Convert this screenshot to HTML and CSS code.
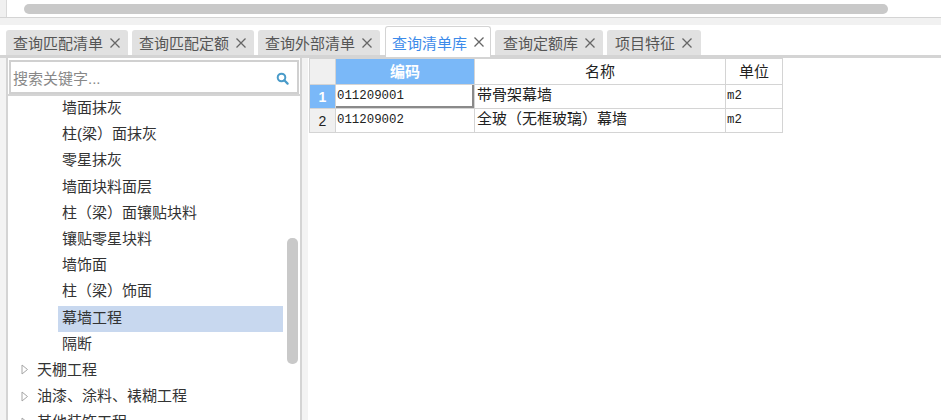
FILE: index.html
```html
<!DOCTYPE html>
<html lang="zh">
<head>
<meta charset="utf-8">
<title>查询清单库</title>
<link rel="stylesheet" href="styles.css">
</head>
<body>
<div class="app">
  <div class="top-panel"><div class="hscroll"></div></div>
  <div class="tabs">
    <div class="tab"><span>查询匹配清单</span><svg class="x" width="10" height="10" viewBox="0 0 10 10"><path d="M.5.5l9 9M9.500.5l-9 9"/></svg></div>
    <div class="tab"><span>查询匹配定额</span><svg class="x" width="10" height="10" viewBox="0 0 10 10"><path d="M.5.5l9 9M9.500.5l-9 9"/></svg></div>
    <div class="tab"><span>查询外部清单</span><svg class="x" width="10" height="10" viewBox="0 0 10 10"><path d="M.5.5l9 9M9.500.5l-9 9"/></svg></div>
    <div class="tab active"><span>查询清单库</span><svg class="x" width="10" height="10" viewBox="0 0 10 10"><path d="M.5.5l9 9M9.500.5l-9 9"/></svg></div>
    <div class="tab fifth"><span>查询定额库</span><svg class="x" width="10" height="10" viewBox="0 0 10 10"><path d="M.5.5l9 9M9.500.5l-9 9"/></svg></div>
    <div class="tab last"><span>项目特征</span><svg class="x" width="10" height="10" viewBox="0 0 10 10"><path d="M.5.5l9 9M9.500.5l-9 9"/></svg></div>
  </div>
  <div class="main">
    <aside class="side">
      <div class="search">
        <span class="ph">搜索关键字...</span>
        <svg class="mag" width="13" height="13" viewBox="0 0 13 13"><circle cx="5.500" cy="5.500" r="3.800" fill="none" stroke="#4a9bc9" stroke-width="2"/><path d="M8.300 8.300 L11.600 11.600" stroke="#4a9bc9" stroke-width="2.200" stroke-linecap="round"/></svg>
      </div>
      <div class="tree">
        <div class="node leaf">墙面抹灰</div>
        <div class="node leaf">柱(梁）面抹灰</div>
        <div class="node leaf">零星抹灰</div>
        <div class="node leaf">墙面块料面层</div>
        <div class="node leaf">柱（梁）面镶贴块料</div>
        <div class="node leaf">镶贴零星块料</div>
        <div class="node leaf">墙饰面</div>
        <div class="node leaf">柱（梁）饰面</div>
        <div class="node sel"><span>幕墙工程</span></div>
        <div class="node leaf">隔断</div>
        <div class="node group"><svg class="arrow" width="8" height="11" viewBox="0 0 8 11"><path d="M1 1 L6.500 5.500 L1 10 Z" fill="#fff" stroke="#a6a6a6"/></svg>天棚工程</div>
        <div class="node group"><svg class="arrow" width="8" height="11" viewBox="0 0 8 11"><path d="M1 1 L6.500 5.500 L1 10 Z" fill="#fff" stroke="#a6a6a6"/></svg>油漆、涂料、裱糊工程</div>
        <div class="node group"><svg class="arrow" width="8" height="11" viewBox="0 0 8 11"><path d="M1 1 L6.500 5.500 L1 10 Z" fill="#fff" stroke="#a6a6a6"/></svg>其他装饰工程</div>
        <div class="vscroll"></div>
      </div>
    </aside>
    <section class="grid-wrap">
      <table class="grid">
        <colgroup><col class="c0"><col class="c1"><col class="c2"><col class="c3"></colgroup>
        <tr class="head"><th class="corner"></th><th class="on">编码</th><th>名称</th><th>单位</th></tr>
        <tr><th class="rn on">1</th><td class="cur">011209001</td><td class="big">带骨架幕墙</td><td>m2</td></tr>
        <tr><th class="rn">2</th><td>011209002</td><td class="big">全玻（无框玻璃）幕墙</td><td>m2</td></tr>
      </table>
    </section>
  </div>
</div>
</body>
</html>
```
FILE: styles.css
```css
html, body { margin: 0; padding: 0; }
body { width: 941px; height: 420px; overflow: hidden; background: #fff; font-family: "Liberation Sans", "Noto Sans CJK SC", sans-serif; font-size: 15px; color: #333; }
.app { display: flex; flex-direction: column; height: 420px; }
.top-panel { height: 18px; padding: 4px 53px 0 24px; box-sizing: border-box; background: linear-gradient(90deg, #f0f0f0 0, #f0f0f0 6px, #d9d9d9 6px, #d9d9d9 7px, #fff 7px); border-bottom: 1px solid #d4d4d4; }
.hscroll { height: 10px; background: #c9c9c9; border-radius: 5px; }
.tabs { display: flex; gap: 4px; height: 40px; box-sizing: border-box; padding: 0 0 0 6px; background: linear-gradient(#f1f1f1 0, #f1f1f1 7px, #fff 7px); border-bottom: 3px solid #d4d4d4; align-items: flex-end; }
.tab { display: flex; align-items: center; gap: 6px; height: 25px; box-sizing: border-box; padding: 0 8px 0 7px; background: #e1e1e1; border-radius: 3px 3px 0 0; color: #555; font-size: 15px; white-space: nowrap; }
.tab.active { height: 31px; background: #fff; border: 1px solid #d4d4d4; border-bottom: 0; color: #3d8bea; margin: 0 0 -2px 1px; padding: 0 6px; }
.tab.fifth { padding-left: 8px; }
.tab.last { padding: 0 9px 0 8px; }
.x { fill: none; stroke: #666; stroke-width: 1.3; flex: none; margin-left: 1px; }
.main { flex: 1; display: flex; min-height: 0; background: #f3f3f3; }
.side { width: 296px; margin: 0 6px; border-left: 2px solid #d4d4d4; border-right: 2px solid #d4d4d4; display: flex; flex-direction: column; box-sizing: border-box; background: #fff; }
.search { height: 34px; box-sizing: border-box; margin: 2px 1px 0 1px; border: 2px solid #d0d0d0; display: flex; align-items: center; justify-content: space-between; padding: 0 8px 0 2px; background: #fff; }
.ph { color: #888; font-size: 15px; }
.mag { margin-top: 2px; }
.tree { position: relative; flex: 1; border-top: 2px solid #d4d4d4; overflow: hidden; }
.node { height: 26.2px; line-height: 24px; white-space: nowrap; color: #333; }
.leaf { padding-left: 54px; }
.group { padding: 0 0 2px 13px; box-sizing: border-box; display: flex; align-items: center; gap: 8px; }
.sel { padding-left: 50px; }
.sel span { display: block; width: 221px; padding-left: 4px; background: #c8d8ef; height: 26px; line-height: 24px; }
.vscroll { position: absolute; right: 2px; top: 142px; width: 11px; height: 126px; background: #c9c9c9; border-radius: 5px; }
.grid-wrap { flex: 1; background: #fff; padding-left: 1px; }
.grid { border-collapse: collapse; table-layout: fixed; width: 474px; }
.c0 { width: 26px; } .c1 { width: 139px; } .c2 { width: 251px; } .c3 { width: 57px; }
.grid th, .grid td { border: 1px solid #d4d4d4; padding: 0; height: 23px; font-weight: normal; color: #222; line-height: 18px; }
.grid tr.head th { height: 25px; font-size: 15px; }
.corner { background: #f0f0f0; }
.grid th.on { background: #7ab8f8; color: #fff; font-weight: bold; }
.rn { background: #f0f0f0; text-align: center; font-size: 14px; }
.grid td { height: 22px; padding: 0 0 1px 1px; font-family: "Liberation Mono", "Noto Sans CJK SC", monospace; font-size: 12.4px; }
.grid td.big { height: 20px; padding: 0 0 3px 2px; font-family: "Liberation Sans", "Noto Sans CJK SC", sans-serif; font-size: 15px; }
.grid td.cur { box-shadow: inset -2px -2px 0 #8a8a8a; }
```
